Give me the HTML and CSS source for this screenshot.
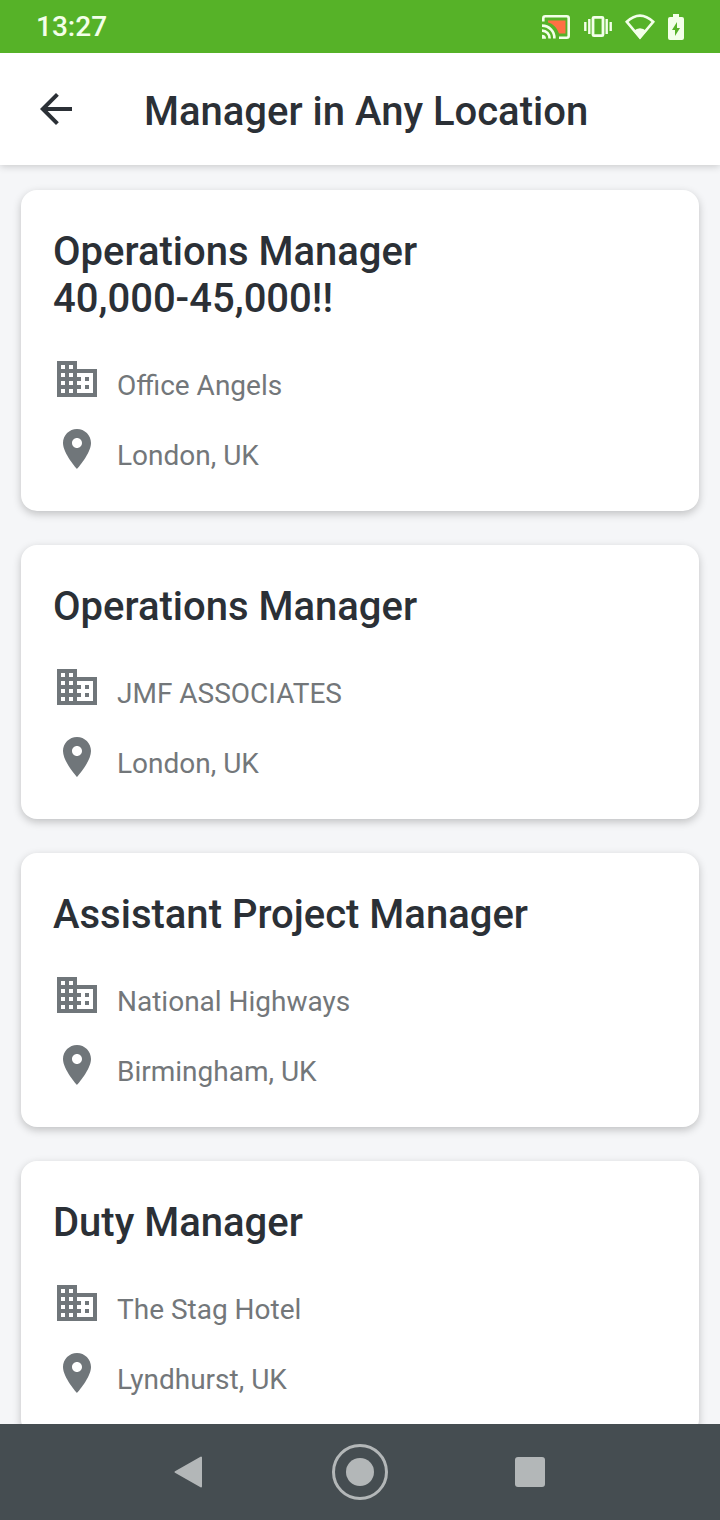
FILE: index.html
```html
<!DOCTYPE html>
<html lang="en">
<head>
    <meta charset="UTF-8">
    <meta name="viewport" content="width=device-width, initial-scale=1.0">
    <title>Manager in Any Location</title>
    <link rel="stylesheet" href="styles.css">
</head>
<body>
    <!-- Icons shared by all job cards -->
    <svg class="icon-defs" width="0" height="0">
        <symbol id="icon-company" viewBox="0 0 24 24">
            <path d="M12 7V3H2v18h20V7H12zM6 19H4v-2h2v2zm0-4H4v-2h2v2zm0-4H4V9h2v2zm0-4H4V5h2v2zm4 12H8v-2h2v2zm0-4H8v-2h2v2zm0-4H8V9h2v2zm0-4H8V5h2v2zm10 12h-8v-2h2v-2h-2v-2h2v-2h-2V9h8v10zm-2-8h-2v2h2v-2zm0 4h-2v2h2v-2z"/>
        </symbol>
        <symbol id="icon-place" viewBox="0 0 24 24">
            <path d="M12 2C8.13 2 5 5.13 5 9c0 5.25 7 13 7 13s7-7.75 7-13c0-3.87-3.13-7-7-7zm0 9.5c-1.38 0-2.5-1.12-2.5-2.5s1.12-2.5 2.5-2.5 2.5 1.12 2.5 2.5-1.12 2.5-2.5 2.5z"/>
        </symbol>
    </svg>

    <div class="status-bar">
        <span class="clock">13:27</span>
        <div class="status-icons">
            <svg width="30" height="26" viewBox="0 0 30 26">
                <path d="M7 6.500h17.500v13H18C16 14 12 9.500 7 8.500z" fill="#ff7043"/>
                <path d="M2.300 7.500V4.300q0-2 2-2h21.400q2 0 2 2v17.400q0 2-2 2H18" fill="none" stroke="#f3ffe9" stroke-width="2.600"/>
                <path d="M1 11.600A12.400 12.400 0 0 1 13.400 24.500M1 16.600A7.600 7.600 0 0 1 8.600 24.500" fill="none" stroke="#f3ffe9" stroke-width="2.600"/>
                <path d="M1 20.800a4 4 0 0 1 4 4H1z" fill="#f3ffe9"/>
            </svg>
            <svg width="28" height="26" viewBox="0 0 28 26">
                <rect x="9" y="3.300" width="10" height="18.400" rx="1" fill="none" stroke="#f3ffe9" stroke-width="2.800"/>
                <path d="M1.300 8v9M5.300 5v15M22.700 5v15M26.700 8v9" stroke="#f3ffe9" stroke-width="2.400"/>
            </svg>
            <svg width="30" height="26" viewBox="0 0 30 26">
                <path d="M1.800 7.800Q15-4.500 28.200 7.800L15 23.500z" fill="none" stroke="#f3ffe9" stroke-width="2.600"/>
                <path d="M8.500 17Q15 11.500 21.500 17L15 25z" fill="#f3ffe9"/>
            </svg>
            <svg width="16" height="26" viewBox="0 0 16 26">
                <path d="M5 0h6v3h3q2 0 2 2v19q0 2-2 2H2q-2 0-2-2V5q0-2 2-2h3z" fill="#f3ffe9"/>
                <path d="M9 8L4 16h3v6l5-8H9z" fill="#56b228"/>
            </svg>
        </div>
    </div>

    <header class="header">
        <button type="button" class="back-button" aria-label="Back">
            <svg width="48" height="48" viewBox="0 0 24 24">
                <path d="M20 11H7.830l5.590-5.590L12 4l-8 8 8 8 1.410-1.410L7.830 13H20v-2z"/>
            </svg>
        </button>
        <h1>Manager in Any Location</h1>
    </header>

    <main class="jobs">
        <article class="card">
            <h2>Operations Manager 40,000-45,000!!</h2>
            <div class="details">
                <p><svg class="icon"><use href="#icon-company"/></svg>Office Angels</p>
                <p><svg class="icon"><use href="#icon-place"/></svg>London, UK</p>
            </div>
        </article>

        <article class="card">
            <h2>Operations Manager</h2>
            <div class="details">
                <p><svg class="icon"><use href="#icon-company"/></svg>JMF ASSOCIATES</p>
                <p><svg class="icon"><use href="#icon-place"/></svg>London, UK</p>
            </div>
        </article>

        <article class="card">
            <h2>Assistant Project Manager</h2>
            <div class="details">
                <p><svg class="icon"><use href="#icon-company"/></svg>National Highways</p>
                <p><svg class="icon"><use href="#icon-place"/></svg>Birmingham, UK</p>
            </div>
        </article>

        <article class="card">
            <h2>Duty Manager</h2>
            <div class="details">
                <p><svg class="icon"><use href="#icon-company"/></svg>The Stag Hotel</p>
                <p><svg class="icon"><use href="#icon-place"/></svg>Lyndhurst, UK</p>
            </div>
        </article>
    </main>

    <nav class="nav-bar">
        <button type="button" aria-label="Back">
            <svg width="60" height="60" viewBox="0 0 60 60">
                <path d="M41 15.500V44.500L15.500 30z" stroke-width="2" stroke-linejoin="round"/>
            </svg>
        </button>
        <button type="button" aria-label="Home">
            <svg width="60" height="60" viewBox="0 0 60 60">
                <circle cx="30" cy="30" r="26.500" fill="none" stroke-width="3"/>
                <circle cx="30" cy="30" r="14" stroke="none"/>
            </svg>
        </button>
        <button type="button" aria-label="Recent apps">
            <svg width="60" height="60" viewBox="0 0 60 60">
                <rect x="15" y="15" width="30" height="30" rx="3" stroke="none"/>
            </svg>
        </button>
    </nav>
</body>
</html>
```

FILE: styles.css
```css
* {
    box-sizing: border-box;
}
body {
    margin: 0;
    height: 100vh;
    display: flex;
    flex-direction: column;
    font-family: Roboto, sans-serif;
    background: #f5f6f8;
    color: #2b3036;
}
h1, h2, p {
    margin: 0;
}
h1, h2 {
    font-size: 40px;
    font-weight: 500;
    line-height: 47px;
}
button {
    padding: 0;
    border: none;
    background: none;
}
svg {
    display: block;
}
.icon-defs {
    position: absolute;
}

.status-bar {
    flex: none;
    z-index: 2;
    display: flex;
    align-items: center;
    justify-content: space-between;
    height: 53px;
    padding: 0 36px;
    background: #56b228;
    color: #f3ffe9;
}
.clock {
    font-size: 28px;
    font-weight: 500;
    line-height: 34px;
}
.status-icons {
    display: flex;
    align-items: center;
    gap: 13px;
}

.header {
    flex: none;
    z-index: 1;
    display: flex;
    align-items: center;
    gap: 64px;
    height: 112px;
    padding: 0 32px;
    background: #fff;
    box-shadow: 0 1px 8px rgba(0, 0, 0, 0.2);
}
.header h1 {
    padding-top: 4px;
}
.back-button svg {
    fill: #2b3036;
}

.jobs {
    flex: 1;
    min-height: 0;
    overflow-y: auto;
    scrollbar-width: none;
    padding: 25px 21px;
}
.card {
    padding: 38px 32px;
    margin-bottom: 34px;
    background: #fff;
    border-radius: 16px;
    box-shadow: 0 3px 8px rgba(0, 0, 0, 0.22);
}
.card h2 {
    max-width: 480px;
    margin-bottom: 33px;
}
.details {
    display: flex;
    flex-direction: column;
    gap: 22px;
}
.details p {
    display: flex;
    align-items: flex-end;
    gap: 16px;
    font-size: 28px;
    line-height: 34px;
    color: #73777a;
}
.icon {
    width: 48px;
    height: 48px;
    fill: #70767a;
}

.nav-bar {
    flex: none;
    z-index: 1;
    display: flex;
    align-items: center;
    justify-content: center;
    gap: 110px;
    height: 96px;
    background: #454d51;
}
.nav-bar svg {
    fill: #b3b7b8;
    stroke: #b3b7b8;
}
```
